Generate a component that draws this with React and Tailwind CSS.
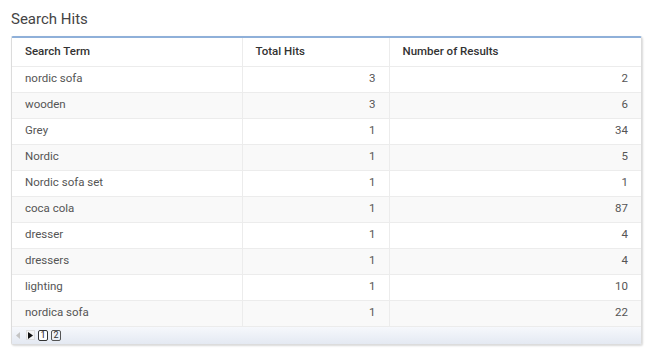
import React from 'react';

const rows = [
  ['nordic sofa', 3, 2],
  ['wooden', 3, 6],
  ['Grey', 1, 34],
  ['Nordic', 1, 5],
  ['Nordic sofa set', 1, 1],
  ['coca cola', 1, 87],
  ['dresser', 1, 4],
  ['dressers', 1, 4],
  ['lighting', 1, 10],
  ['nordica sofa', 1, 22],
];

const App = () => {
  return (
    <div className="w-[656px] h-[355px] bg-white font-['Roboto',sans-serif] text-[#555]">
      <div className="pl-[11px] pt-[9px] h-[36px] text-[15px] leading-[20px] text-[#444]">Search Hits</div>
      <div className="ml-[11px] w-[631px] border border-[#dcdcdc] border-t-2 border-t-[#8fb0d9] rounded-[2px] shadow-[1px_1px_2px_rgba(0,0,0,0.15)]">
        <table className="w-full border-collapse text-[11.5px]">
          <thead>
            <tr className="h-[28px] border-b border-[#ececec]">
              <th className="w-[230px] text-left font-medium text-[#333] pl-[13px] border-r border-[#ececec]">Search Term</th>
              <th className="w-[147px] text-left font-medium text-[#333] pl-[13px] border-r border-[#ececec]">Total Hits</th>
              <th className="text-left font-medium text-[#333] pl-[13px]">Number of Results</th>
            </tr>
          </thead>
          <tbody>
            {rows.map((r, i) => (
              <tr key={i} className={`h-[26px] border-b border-[#ececec] ${i % 2 === 1 ? 'bg-[#f9f9f9]' : 'bg-white'}`}>
                <td className="pl-[13px] border-r border-[#ececec]">{r[0]}</td>
                <td className="pr-[13px] text-right border-r border-[#ececec]">{r[1]}</td>
                <td className="pr-[13px] text-right">{r[2]}</td>
              </tr>
            ))}
          </tbody>
        </table>
        {/* pager */}
        <div className="h-[17px] flex items-center gap-[3px] pl-[2px] bg-gradient-to-b from-[#f6f8fc] to-[#e4e9f2]">
          <svg width="9" height="9" viewBox="0 0 9 9"><path d="M6 1 L2 4.5 L6 8 Z" fill="#c4c4c4" /></svg>
          <div className="w-[9px] h-[10px] flex items-center justify-center bg-[#f4f4f4] border border-[#ddd]">
            <svg width="7" height="7" viewBox="0 0 7 7"><path d="M1 0 L6 3.5 L1 7 Z" fill="#111" /></svg>
          </div>
          <div className="w-[10px] h-[11px] flex items-center justify-center border border-[#333] rounded-[2px] text-[9px] leading-none text-[#222] bg-white">1</div>
          <div className="w-[10px] h-[11px] flex items-center justify-center border border-[#555] rounded-[2px] text-[9px] leading-none text-[#333]">2</div>
        </div>
      </div>
    </div>
  );
};

export default App;
